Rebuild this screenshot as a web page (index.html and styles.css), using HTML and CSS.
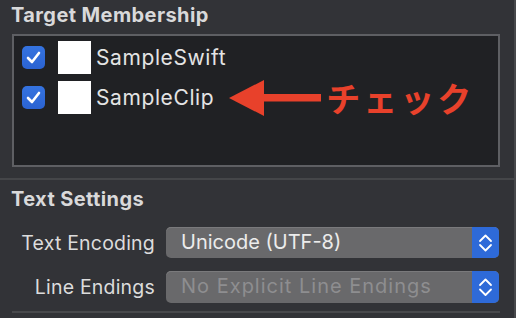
FILE: index.html
```html
<!DOCTYPE html>
<html>
<head>
<meta charset="utf-8">
<link rel="stylesheet" href="styles.css">
</head>
<body>
<div class="panel">
  <section class="membership">
    <h2 class="title">Target Membership</h2>
    <div class="list">
      <div class="row">
        <span class="check"><svg viewBox="0 0 23 23" width="23" height="23"><path d="M6 12 L10 16 L17 7" fill="none" stroke="#fff" stroke-width="2.6" stroke-linecap="round" stroke-linejoin="round"/></svg></span>
        <span class="icon"></span>
        <span class="name">SampleSwift</span>
      </div>
      <div class="row">
        <span class="check"><svg viewBox="0 0 23 23" width="23" height="23"><path d="M6 12 L10 16 L17 7" fill="none" stroke="#fff" stroke-width="2.6" stroke-linecap="round" stroke-linejoin="round"/></svg></span>
        <span class="icon"></span>
        <span class="name">SampleClip</span>
        <span class="note">
          <svg class="arrow" viewBox="0 0 92 36" width="92" height="36"><polygon points="0,18 35,0 35,36" fill="#e8412b"/><rect x="34" y="14" width="58" height="7.5" fill="#e8412b"/></svg>
          <span class="jp">チェック</span>
        </span>
      </div>
    </div>
  </section>
  <section class="settings">
    <h2 class="title">Text Settings</h2>
    <div class="form">
      <label class="label">Text Encoding</label>
      <div class="popup">
        <span class="value">Unicode (UTF-8)</span>
        <span class="stepper"><svg viewBox="0 0 27 31" width="27" height="31"><path d="M8 14 L13.5 8.5 L19 14 M8 18 L13.5 23.5 L19 18" fill="none" stroke="#fff" stroke-width="1.8" stroke-linecap="round" stroke-linejoin="round"/></svg></span>
      </div>
      <label class="label">Line Endings</label>
      <div class="popup disabled">
        <span class="value">No Explicit Line Endings</span>
        <span class="stepper"><svg viewBox="0 0 27 32" width="27" height="32"><path d="M8 14 L13.5 8.5 L19 14 M8 18.5 L13.5 24 L19 18.5" fill="none" stroke="#fff" stroke-width="1.8" stroke-linecap="round" stroke-linejoin="round"/></svg></span>
      </div>
    </div>
    <div class="bottom-line"></div>
  </section>
</div>
</body>
</html>
```
FILE: styles.css
```css
html, body {
  margin: 0;
  padding: 0;
  background: #323337;
}
body {
  width: 516px;
  height: 318px;
  overflow: hidden;
  font-family: Inter, "Liberation Sans", sans-serif;
  color: #dedede;
}
.panel {
  width: 514px;
  height: 318px;
  border-right: 2px solid #47484b;
  background: #323337;
}
.title {
  margin: 0;
  font-size: 20px;
  font-weight: 700;
  color: #d9d9da;
  padding-left: 11px;
  letter-spacing: 0.4px;
}
.membership {
  height: 178px;
  border-bottom: 2px solid #454649;
  box-sizing: content-box;
}
.membership .title {
  height: 34px;
  line-height: 30px;
}
.list {
  margin-left: 12px;
  width: 484px;
  height: 124px;
  border: 2px solid #5e5f63;
  background: #202124;
  padding-top: 5px;
  box-sizing: content-box;
}
.row {
  display: flex;
  align-items: center;
  height: 33px;
  margin-bottom: 7px;
  padding-left: 8px;
}
.check {
  width: 23px;
  height: 23px;
  border-radius: 5px;
  background: linear-gradient(#3573e0, #2b63d2);
  display: flex;
}
.icon {
  width: 33px;
  height: 33px;
  background: #fff;
  margin-left: 13px;
}
.name {
  margin-left: 5px;
  font-size: 21px;
  color: #e4e4e4;
  letter-spacing: 0.6px;
}
.note {
  display: flex;
  align-items: center;
  margin-left: 15px;
}
.arrow {
  display: block;
}
.jp {
  margin-left: 5px;
  font-family: "Noto Sans CJK JP", sans-serif;
  font-weight: 700;
  font-size: 34px;
  letter-spacing: 3px;
  color: #e8412b;
  line-height: 36px;
}
.settings .title {
  height: 47px;
  line-height: 38px;
}
.form {
  display: grid;
  grid-template-columns: 155px 333px;
  column-gap: 11px;
  row-gap: 13px;
  align-items: center;
}
.label {
  text-align: right;
  font-size: 19.5px;
  color: #dcdcdc;
  letter-spacing: 0.2px;
}
.popup {
  display: flex;
  height: 31px;
  border-radius: 5px;
  background: #69696b;
  overflow: hidden;
  box-shadow: inset 0 1px 0 #7a7a7c;
}
.popup.disabled {
  height: 32px;
}
.value {
  flex: 1;
  padding-left: 15px;
  font-size: 20px;
  line-height: 31px;
  color: #ececec;
  letter-spacing: 0;
}
.disabled .value {
  color: #8e8e90;
  letter-spacing: 1px;
}
.stepper {
  width: 27px;
  background: #2e6ad8;
  display: flex;
}
.bottom-line {
  margin: 8px 14px 0 12px;
  height: 2px;
  background: #48494c;
}
```
